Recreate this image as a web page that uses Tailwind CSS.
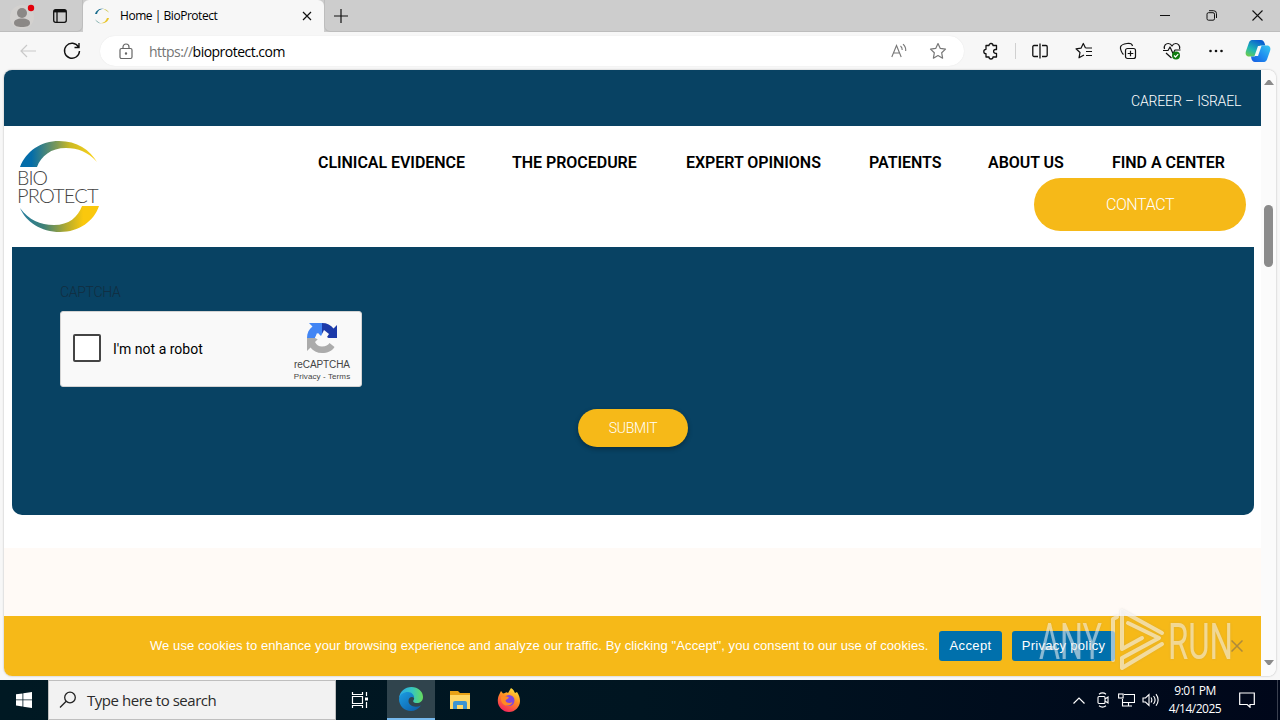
<!DOCTYPE html>
<html lang="en">
<head>
    <meta charset="UTF-8">
    <meta name="viewport" content="width=device-width, initial-scale=1.0">
    <title>Home | BioProtect</title>
    <script src="https://cdn.jsdelivr.net/npm/@tailwindcss/browser@4"></script>
</head>
<body class="w-[1280px] h-[720px] overflow-hidden bg-[#f7f7f7] font-['Open_Sans',sans-serif] text-black flex flex-col">

    <!-- Tab strip -->
    <div class="h-8 bg-[#cdcdcd] flex shrink-0">
        <div class="w-[83px] flex items-center border-b border-r border-[#bdbdbd] rounded-br-md">
            <svg class="w-9 h-8 ml-2" viewBox="0 0 36 32">
                <circle cx="14" cy="17" r="12" fill="#d3d1cf"/>
                <circle cx="14" cy="13" r="5" fill="#8b8886"/>
                <path d="M6 23c0-3 3-4.500 8-4.500s8 1.500 8 4.500-3.500 4-8 4-8-1-8-4z" fill="#8b8886"/>
                <circle cx="23" cy="8" r="3.200" fill="#e3000b"/>
            </svg>
            <svg class="w-4 h-4 ml-2" viewBox="0 0 16 16" fill="none" stroke="#111" stroke-width="1.300">
                <rect x="1.700" y="1.700" width="12.600" height="12.600" rx="2"/>
                <path d="M2 3.200h12" stroke-width="2.400"/><path d="M5 4v10"/>
            </svg>
        </div>
        <div class="w-[241px] bg-[#f7f7f7] rounded-t-md flex items-center">
            <svg class="w-4 h-4 ml-[11px]" viewBox="0 0 16 16">
                <path d="M1 6C2 2 6 0 10 .8 6 1 3.500 3 3 6z" fill="#176b8d"/>
                <path d="M9 .7c3 .2 5 2 6 4-2-2-4-3-6-4z" fill="#c9c34a"/>
                <path d="M15 10c-1 4-5 6-9 5.200 4-.2 6-2.200 7-5.200z" fill="#e8c52a"/>
                <path d="M7 15.400c-3-.4-5-2-5.800-4.200 1.800 2 3.500 3.400 5.800 4.200z" fill="#4b8d8a"/>
            </svg>
            <span class="ml-[10px] w-[170px] text-[12px] tracking-[-0.46px] whitespace-nowrap">Home | BioProtect</span>
            <svg class="w-[10px] h-[10px] ml-[12px]" viewBox="0 0 10 10" stroke="#111" stroke-width="1.200"><path d="M1 1l8 8M9 1l-8 8"/></svg>
        </div>
        <div class="flex-1 flex items-center border-b border-l border-[#bdbdbd] rounded-bl-md">
            <svg class="w-[14px] h-[14px] ml-[9px]" viewBox="0 0 14 14" stroke="#111" stroke-width="1.200"><path d="M7 0v14M0 7h14"/></svg>
            <div class="ml-auto flex text-black">
                <div class="w-[46px] flex justify-center"><svg class="w-[10px] h-[10px]" viewBox="0 0 10 10" stroke="#111"><path d="M0 5.500h10"/></svg></div>
                <div class="w-[46px] flex justify-center"><svg class="w-[11px] h-[11px]" viewBox="0 0 11 11" fill="none" stroke="#111"><rect x="1" y="2.700" width="7.500" height="7.500" rx="1.500"/><path d="M3 .7h4.500a3 3 0 0 1 3 3V8"/></svg></div>
                <div class="w-[46px] flex justify-center"><svg class="w-[11px] h-[11px]" viewBox="0 0 11 11" stroke="#111" stroke-width="1.100"><path d="M.5.5l10 10M10.500.5l-10 10"/></svg></div>
            </div>
        </div>
    </div>

    <!-- Toolbar -->
    <div class="h-[38px] shrink-0 flex items-center">
        <svg class="w-4 h-4 ml-5" viewBox="0 0 16 16" fill="none" stroke="#c9c9c9" stroke-width="1.200"><path d="M16 8H1M7 2L1 8l6 6"/></svg>
        <svg class="w-[18px] h-[18px] ml-[27px]" viewBox="0 0 18 18" fill="none" stroke="#111" stroke-width="1.400"><path d="M15.500 5A7.500 7.500 0 1 0 16.500 9M16 1v4.500h-4.500"/></svg>
        <div class="ml-[19px] w-[864px] h-[30px] rounded-full bg-white flex items-center shadow-[0_0_1px_#ddd]">
            <svg class="w-4 h-[17px] ml-[18px]" viewBox="0 0 16 17" fill="none" stroke="#666" stroke-width="1.200">
                <rect x="2" y="5.500" width="12" height="10" rx="1.500"/><path d="M5 5.500V4a3 3 0 0 1 6 0v1.500"/><circle cx="8" cy="10.500" r=".6" fill="#666"/>
            </svg>
            <span class="ml-[15px] text-[14px] tracking-[-0.52px] whitespace-nowrap"><span class="text-[#757575]">https://</span>bioprotect.com</span>
            <svg class="w-[17px] h-4 ml-auto" viewBox="0 0 17 16" fill="none" stroke="#777" stroke-width="1.100">
                <path d="M.8 14L5.500 2.500l4.700 11.500M2.500 10h6M9.500 3c1.200 1 1.800 2.300 1.700 4M12 1.200C14 3 15 5.200 14.700 8"/>
            </svg>
            <svg class="w-[18px] h-[18px] ml-[21px] mr-[17px]" viewBox="0 0 18 18" fill="none" stroke="#777" stroke-width="1.200" stroke-linejoin="round"><path d="M9 1.500l2.300 4.900 5.200.7-3.800 3.700.9 5.400L9 13.600l-4.600 2.600.9-5.400L1.500 7.100l5.200-.7z"/></svg>
        </div>
        <div class="w-[52px] h-[18px] flex items-center">
            <svg class="w-[18px] h-[18px] ml-[18px]" viewBox="0 0 18 18" fill="none" stroke="#111" stroke-width="1.300" stroke-linejoin="round">
                <path d="M4 3.500h3a2 2 0 0 1 4 0h3.500v4h-1a1.800 1.800 0 0 0 0 3.800h1V15H11a2 2 0 0 1-4 0H4v-3.300a2.200 2.200 0 0 1 0-4.400z"/>
            </svg>
        </div>
        <div class="w-px h-4 ml-[-1px] mr-[12px] translate-x-0 bg-[#d0d0d0]"></div>
        <div class="w-[34px] flex">
            <svg class="w-4 h-4 ml-1" viewBox="0 0 16 16" fill="none" stroke="#111" stroke-width="1.300"><path d="M6 2.500H2A1.200 1.200 0 0 0 .8 3.700v8.600A1.200 1.200 0 0 0 2 13.500h4M10 2.500h4a1.200 1.200 0 0 1 1.200 1.200v8.600a1.200 1.200 0 0 1-1.200 1.200h-4M8 .5v15"/></svg>
        </div>
        <div class="w-11 flex justify-center">
            <svg class="w-[18px] h-[18px]" viewBox="0 0 18 18" fill="none" stroke="#111" stroke-width="1.200" stroke-linejoin="round"><path d="M10.500 6H17M11 9.500h6M11 13.500h6M9 13L4 15.800l1-5.300L1 6.800l5-.6L8.300 1.500l2.200 4.500"/></svg>
        </div>
        <div class="w-11 flex justify-center">
            <svg class="w-[18px] h-[18px]" viewBox="0 0 18 18" fill="none" stroke="#111" stroke-width="1.200"><rect x="6.500" y="6.500" width="10" height="10" rx="2"/><path d="M11.500 8.700v5.600M8.700 11.500h5.600M4.500 12.500C3 11.500 1 7 1.500 5S4 2 8 1.500s5 .3 5.500 2.500"/></svg>
        </div>
        <div class="w-11 flex justify-center">
            <svg class="w-[18px] h-[18px]" viewBox="0 0 18 18" fill="none" stroke="#111" stroke-width="1.200" stroke-linejoin="round">
                <path d="M1.500 7C.5 3.500 3 1.500 5.200 1.500S8.500 3 9 4c.5-1 1.500-2.500 3.800-2.500S17.500 4 16.500 7M0 8.500h5l2-3.500 3 6.500 2-3.500h5.500M3 11l5.500 5"/>
                <circle cx="13" cy="13.500" r="4" fill="#107c10" stroke="none"/><path d="M11 13.500l1.500 1.500 2.700-2.800" stroke="#fff"/>
            </svg>
        </div>
        <div class="w-11 flex justify-center">
            <svg class="w-4 h-4" viewBox="0 0 16 16" fill="#111"><circle cx="2.500" cy="8" r="1.300"/><circle cx="8" cy="8" r="1.300"/><circle cx="13.500" cy="8" r="1.300"/></svg>
        </div>
        <svg class="w-[26px] h-6 ml-[7px]" viewBox="0 0 26 24">
            <defs>
                <linearGradient id="copilotA" x1="0" y1="1" x2=".6" y2="0"><stop offset="0" stop-color="#7ccf3a"/><stop offset=".45" stop-color="#1fb8b4"/><stop offset="1" stop-color="#0a5fd0"/></linearGradient>
                <linearGradient id="copilotB" x1="1" y1="0" x2="0" y2="1"><stop offset="0" stop-color="#39c8f0"/><stop offset=".5" stop-color="#1f8ff0"/><stop offset="1" stop-color="#1559e0"/></linearGradient>
            </defs>
            <path d="M8 1h8c2 0 3 1.500 3.500 3l.8 2.500H16c-1.500 0-2.300.7-3 2.500l-2 6c-.6 2-1.600 2.500-3.500 2.500H4C1 17.500 0 15 1 12L4 3.500C4.800 1.500 6 1 8 1z" fill="url(#copilotA)"/>
            <path d="M18 6.500h4c3 0 4 2.500 3 5.500l-3 8.500c-.8 2-2 2.500-4 2.500h-8c-2 0-3-1.500-3.500-3L6 17.500h2c2 0 3-.5 3.700-2.500l2-6c.6-1.900 2-2.500 4.300-2.500z" fill="url(#copilotB)"/>
            <path d="M13 7h3.500l-3.500 10H9.500z" fill="#f7f7f7"/>
        </svg>
    </div>

    <!-- Page viewport -->
    <div class="h-[606px] mx-1 shrink-0 flex rounded-lg overflow-hidden bg-white shadow-[0_0_2px_#aaa]">
        <div class="w-[1257px] flex flex-col relative">
            <div class="h-14 bg-[#084263] shrink-0 flex justify-end items-center pt-[6px] pr-5">
                <span class="w-[110px] text-white font-['Roboto',sans-serif] text-[14px] font-light tracking-[-0.15px] whitespace-nowrap">CAREER – ISRAEL</span>
            </div>

            <header class="h-[121px] shrink-0 flex justify-between bg-white">
                <svg class="w-[84px] h-[94px] ml-[13px] mt-[14px]" viewBox="0 0 84 94">
                    <defs>
                        <linearGradient id="arcTop"><stop offset=".15" stop-color="#046da9"/><stop offset=".48" stop-color="#7f9a55"/><stop offset=".65" stop-color="#cbb923"/><stop offset="1" stop-color="#ffd51c"/></linearGradient>
                        <linearGradient id="arcBottom"><stop offset="0" stop-color="#247ca0"/><stop offset=".3" stop-color="#3f8177"/><stop offset=".6" stop-color="#b8ad2c"/><stop offset=".8" stop-color="#fac80d"/></linearGradient>
                    </defs>
                    <path d="M3 27C9 11 24 1 42 1c18 0 31 9 38 21C71 12 61 8 49 8 34 8 24 16 20 27z" fill="url(#arcTop)"/>
                    <path d="M82 66C77 81 62 92 43 92 24 92 9 82 3 68c9 12 20 17 34 17 15 0 24-8 28-19z" fill="url(#arcBottom)"/>
                    <text x="0" y="45" font-family="Lato" font-weight="300" font-size="19.500" fill="#444" textLength="31">BIO</text>
                    <text x="0" y="63" font-family="Lato" font-weight="300" font-size="20" fill="#444" textLength="81.500">PROTECT</text>
                </svg>
                <div class="flex flex-col items-end">
                    <nav class="mt-[25px] mr-9 h-6 flex gap-12 items-center font-['Roboto',sans-serif] font-semibold text-[16px] tracking-[-0.04px] whitespace-nowrap">
                        <span class="w-[146px]">CLINICAL EVIDENCE</span>
                        <span class="w-[126px]">THE PROCEDURE</span>
                        <span class="w-[135px]">EXPERT OPINIONS</span>
                        <span class="w-[71px]">PATIENTS</span>
                        <span class="w-[76px]">ABOUT US</span>
                        <span class="w-[113px]">FIND A CENTER</span>
                    </nav>
                    <div class="mt-[3px] mr-[15px] w-[212px] h-[53px] rounded-full bg-[#f6b918] flex items-center justify-center text-white font-['Roboto',sans-serif] font-light text-[16px] tracking-[-0.4px]">CONTACT</div>
                </div>
            </header>

            <section class="mx-2 mr-[7px] h-[268px] shrink-0 bg-[#084263] rounded-b-[10px] px-12 pt-9">
                <div class="h-[19px] flex items-center text-[#122d3f] font-['Roboto',sans-serif] font-light text-[14px] tracking-[-0.3px]">CAPTCHA</div>
                <div class="mt-[9px] w-[302px] h-[76px] rounded-[3px] bg-[#f9f9f9] border border-[#d3d3d3] flex items-center">
                    <div class="ml-3 w-7 h-7 -mt-[2px] rounded-[2px] border-2 border-[#444] bg-white"></div>
                    <span class="ml-3 w-[90px] font-['Roboto',sans-serif] text-[14px] whitespace-nowrap">I'm not a robot</span>
                    <div class="ml-auto mr-[10px] w-[58px] pt-[7px] flex flex-col items-center font-['Liberation_Sans',sans-serif] text-[#444] whitespace-nowrap">
                        <svg class="w-8 h-8" viewBox="0 0 32 32">
                            <path d="M16 1c5 0 9 2 11.500 5.500L31 3v13H20l-4-4z" fill="#1c3aa9"/>
                            <path d="M1 16c0-5 2-9 5.500-11.500L3 1h13v15l-5-5-2 5z" fill="#4285f4"/>
                            <path d="M1 16h12l-4 4c1.500 3 4 4.500 7 4.500 4 0 6-1.500 7.500-3.500l5 4C26 29 21.500 31 16 31c-5 0-9-2-11.500-5.500L1 29z" fill="#ababab"/>
                            <path d="M9 16l3-5 3 3 3-6 5 4-2 3 3 2-7 6-3-3-3 2 2-4z" fill="#f9f9f9"/>
                        </svg>
                        <div class="mt-1 text-[10px] leading-[13px] tracking-[-0.1px]">reCAPTCHA</div>
                        <div class="text-[8px] leading-[12px] tracking-[0.1px]">Privacy - Terms</div>
                    </div>
                </div>
                <div class="mt-[22px] mx-auto w-[110px] h-[38px] rounded-full bg-[#f6b918] shadow-[0_2px_5px_#0005] flex items-center justify-center text-white font-['Roboto',sans-serif] font-light text-[14px] tracking-[-0.25px]">SUBMIT</div>
            </section>
            <div class="h-[33px] shrink-0 bg-white"></div>
            <div class="flex-1 bg-[#fffaf6]"></div>

            <div class="h-[60px] shrink-0 bg-[#f6b918] flex items-center pl-[146px] font-['Liberation_Sans',sans-serif] text-[13px] text-white whitespace-nowrap">
                <span class="w-[779px] tracking-[0.078px]">We use cookies to enhance your browsing experience and analyze our traffic. By clicking "Accept", you consent to our use of cookies.</span>
                <span class="ml-[10px] w-[63px] h-[30px] rounded-[3px] bg-[#0070ac] flex items-center justify-center tracking-[0.35px]">Accept</span>
                <span class="ml-[10px] w-[103px] h-[30px] rounded-[3px] bg-[#0070ac] flex items-center justify-center tracking-[0.3px]">Privacy policy</span>
                <svg class="w-3 h-3 ml-auto mr-[18px]" viewBox="0 0 12 12" stroke="#ad8a3c" stroke-width="1.500"><path d="M.5.5l11 11M11.500.5l-11 11"/></svg>
            </div>

            <!-- Watermark over the cookie bar -->
            <svg class="absolute left-[1030px] top-[534px] w-[206px] h-[72px] drop-shadow-[0_0_1px_#8886]" viewBox="0 0 206 72">
                <g font-family="Roboto" font-size="50" fill="#fff" fill-opacity=".5">
                    <text x="5" y="55" textLength="63" lengthAdjust="spacingAndGlyphs">ANY</text>
                    <text x="134" y="55" textLength="65" lengthAdjust="spacingAndGlyphs">RUN</text>
                </g>
                <path d="M83 13l-4 2v41M88 45V7l40 22M94 19l31 15-37 20M88 45l20-11M128 40L88 64V54" fill="none" stroke="#fff" stroke-opacity=".55" stroke-width="4" stroke-linejoin="round" stroke-linecap="round"/>
            </svg>
        </div>

        <!-- Scrollbar -->
        <div class="w-[15px] bg-[#fbfbfb] flex flex-col items-center">
            <svg class="w-[10px] h-[6px] mt-[9px] shrink-0" viewBox="0 0 10 6" fill="#8b8b8b"><path d="M0 6l4-5h2l4 5z"/></svg>
            <div class="mt-[120px] w-[9px] h-[62px] shrink-0 rounded-full bg-[#8b8b8b]"></div>
            <svg class="w-[10px] h-[6px] mt-auto mb-[10px] shrink-0" viewBox="0 0 10 6" fill="#8b8b8b"><path d="M0 0l4 5h2l4-5z"/></svg>
        </div>
    </div>

    <!-- Taskbar -->
    <div class="mt-1 h-10 shrink-0 flex items-center bg-linear-to-r from-[#001923] via-[#001521] to-[#00071a] text-white">
        <div class="w-12 flex justify-center"><svg class="w-4 h-4" viewBox="0 0 16 16" fill="#fff"><path d="M0 2.300l6.500-.9v6.100H0zM7.300 1.200L16 0v7.500H7.300zM0 8.300h6.500v6.200L0 13.600zM7.300 8.300H16V16l-8.700-1.300z"/></svg></div>
        <div class="w-72 h-10 bg-[#f2f2f2] border border-[#bfbfbf] flex items-center text-[#2b2b2b]">
            <svg class="w-[18px] h-[18px] ml-[10px]" viewBox="0 0 18 18" fill="none" stroke="#222" stroke-width="1.300"><circle cx="11" cy="6.500" r="5.300"/><path d="M7.200 10.200L1 16.500"/></svg>
            <span class="ml-[10px] text-[15px] tracking-[-0.46px]">Type here to search</span>
        </div>
        <div class="w-[51px] flex justify-center">
            <svg class="w-[18px] h-[18px] -ml-1" viewBox="0 0 18 18" fill="none" stroke="#fff" stroke-width="1.200"><path d="M1.500 1v2.500h10V1M1.500 17v-2.500h10V17M1.500 5.500h10v7h-10zM15.500 1v4M15.500 11v6"/><path d="M14 6.500h3v3h-3z" fill="#fff" stroke="none"/></svg>
        </div>
        <div class="w-12 h-10 bg-[#30444d] border-b-2 border-[#76b9ed] flex items-center justify-center">
            <svg class="w-6 h-6" viewBox="0 0 24 24">
                <defs>
                    <linearGradient id="edgeTop" x1="0" x2="1"><stop offset="0" stop-color="#2aa7e8"/><stop offset=".55" stop-color="#36c6c0"/><stop offset="1" stop-color="#66dc5c"/></linearGradient>
                    <linearGradient id="edgeBottom" x1="0" y1="0" x2="1" y2="1"><stop offset="0" stop-color="#1b9de2"/><stop offset="1" stop-color="#0c59a4"/></linearGradient>
                </defs>
                <path d="M0 11C1 4 6 0 12.500 0 19 0 24 4.500 24 10c0 4-3 6-6 6-3.500 0-4.500-1.500-3.300-3 1.500-2.500-.7-5-4.700-5-5 0-9 2-10 3z" fill="url(#edgeTop)"/>
                <path d="M0 12c1-5 4.500-7 9-7 3.500 0 6.500 3 6 6-1.500-2-5.500-1-5.500 3 0 4.500 6 7.500 12.500 4.500C19.500 22 16 24 12 24 5 24 0 18.500 0 12z" fill="url(#edgeBottom)"/>
            </svg>
        </div>
        <div class="w-[49px] flex justify-center">
            <svg class="w-[22px] h-5" viewBox="0 0 22 20">
                <path d="M1 1h8l2 2h10v5H1z" fill="#e8a217"/><path d="M1 5h20v14H1z" fill="#ffd766"/>
                <path d="M4 19v-6q0-2 2-2h10q2 0 2 2v6h-4v-4H8v4z" fill="#3d94d1"/>
            </svg>
        </div>
        <div class="w-[49px] flex justify-center">
            <svg class="w-6 h-6" viewBox="0 0 24 24">
                <defs><linearGradient id="fox" x1=".8" y1="0" x2=".3" y2="1"><stop offset="0" stop-color="#ffe83d"/><stop offset=".45" stop-color="#ff9022"/><stop offset="1" stop-color="#f5215e"/></linearGradient></defs>
                <path d="M2 7l2-4 2 2.500L8 5c1-1 2-1 3 0l3-5c3 2 3 3 4 5l2-1c2 3 3 6 3 9 0 6-5 11-11 11S.8 19 .8 13C.8 11 1 9 2 7z" fill="url(#fox)"/>
                <circle cx="12" cy="12.500" r="5.500" fill="#8047dc"/>
                <path d="M4 9c3-2 6-1 8 .5-1 2-3 1.500-3.500 3 1 3 5 3 7 1.500-1 3-4 4-7 3.500-3-.7-5-4-4.500-8.500z" fill="#ff8a24"/>
            </svg>
        </div>
        <div class="ml-auto flex items-center">
            <svg class="w-3 h-[7px]" viewBox="0 0 12 7" fill="none" stroke="#fff" stroke-width="1.200"><path d="M.5 6.500L6 1l5.500 5.500"/></svg>
            <svg class="w-3 h-4 ml-3" viewBox="0 0 12 16" fill="none" stroke="#fff" stroke-width="1.100"><rect x="1" y="4.500" width="7" height="7" rx="1"/><path d="M8 7l3-2v6L8 9M2 2.200c2-1.500 5-1.500 7 0M2 13.800c2 1.500 5 1.500 7 0"/></svg>
            <svg class="w-[17px] h-[14px] ml-[9px]" viewBox="0 0 17 14" fill="none" stroke="#fff" stroke-width="1.100"><path d="M6 1.500h10.500v8H4.500V6M8 13h6M10.500 9.500V13M4.500 6v7H8"/><rect x=".6" y="1" width="4.500" height="4"/></svg>
            <svg class="w-[17px] h-[14px] ml-[7px]" viewBox="0 0 17 14" fill="none" stroke="#fff" stroke-width="1.100"><path d="M1 5h2.500L7 1.500v11L3.500 9H1zM9 4.500c1 1.500 1 3.500 0 5M11.500 3c2 2.500 2 5.500 0 8M14 1.200c2.600 3.500 2.600 8 0 11.600"/></svg>
            <div class="ml-[8px] w-[56px] flex flex-col items-center text-[12px] leading-[18px] tracking-[-0.5px] whitespace-nowrap">
                <span>9:01 PM</span>
                <span>4/14/2025</span>
            </div>
            <svg class="w-4 h-4 ml-[16px] mr-[22px]" viewBox="0 0 16 16" fill="none" stroke="#fff" stroke-width="1.200"><path d="M.7 1h14.600v11.500h-4.300v2.700l-2.800-2.700H.7z"/></svg>
            <div class="w-px h-10 mr-[2px] bg-[#3a4050]"></div>
        </div>
    </div>
</body>
</html>
